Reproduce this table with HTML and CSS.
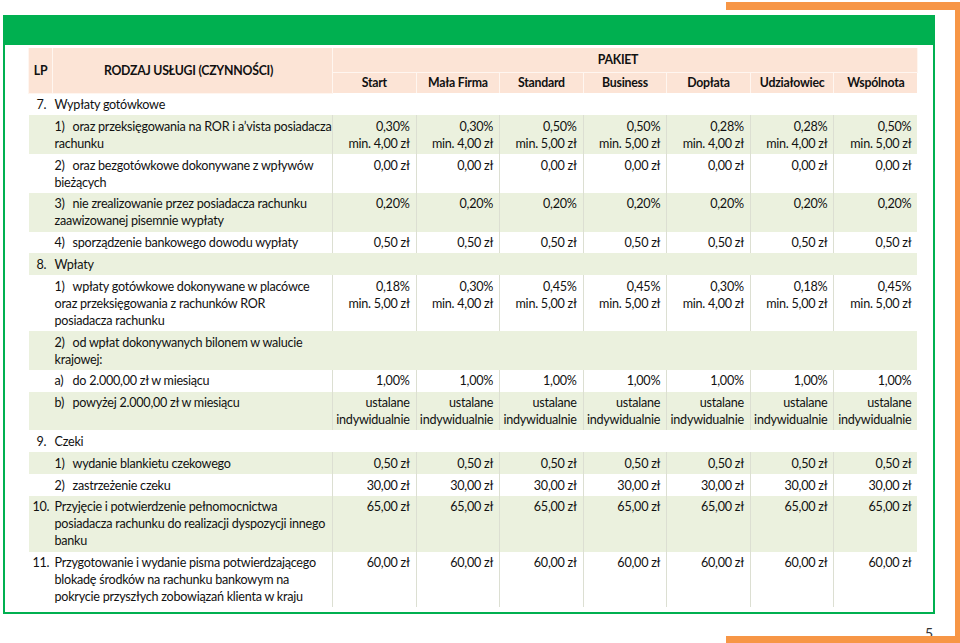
FILE: index.html
```html
<!DOCTYPE html>
<html lang="pl">
<head>
<meta charset="utf-8">
<title>Tabela opłat</title>
<link rel="stylesheet" href="styles.css">
</head>
<body>
<div class="page">
  <div class="frame">
    <table class="fees">
      <colgroup>
        <col class="c-lp"><col class="c-name">
        <col class="c-val"><col class="c-val"><col class="c-val"><col class="c-val"><col class="c-val"><col class="c-val"><col class="c-val">
      </colgroup>
      <thead>
        <tr class="h1">
          <th rowspan="2" class="th-lp">LP</th>
          <th rowspan="2" class="th-name">RODZAJ USŁUGI (CZYNNOŚCI)</th>
          <th colspan="7" class="th-pak">PAKIET</th>
        </tr>
        <tr class="h2">
          <th>Start</th><th>Mała Firma</th><th>Standard</th><th>Business</th><th>Dopłata</th><th>Udziałowiec</th><th>Wspólnota</th>
        </tr>
      </thead>
      <tbody>
        <tr class="sec">
          <td class="lp">7.</td><td colspan="8" class="sec-t">Wypłaty gotówkowe</td>
        </tr>
        <tr class="g">
          <td></td><td class="name"><span class="n">1)</span><span class="t">oraz przeksięgowania na ROR i a’vista posiadacza<br>rachunku</span></td>
          <td class="v">0,30%<br>min. 4,00 zł</td><td class="v">0,30%<br>min. 4,00 zł</td><td class="v">0,50%<br>min. 5,00 zł</td><td class="v">0,50%<br>min. 5,00 zł</td><td class="v">0,28%<br>min. 4,00 zł</td><td class="v">0,28%<br>min. 4,00 zł</td><td class="v">0,50%<br>min. 5,00 zł</td>
        </tr>
        <tr>
          <td></td><td class="name"><span class="n">2)</span><span class="t">oraz bezgotówkowe dokonywane z wpływów<br>bieżących</span></td>
          <td class="v">0,00 zł</td><td class="v">0,00 zł</td><td class="v">0,00 zł</td><td class="v">0,00 zł</td><td class="v">0,00 zł</td><td class="v">0,00 zł</td><td class="v">0,00 zł</td>
        </tr>
        <tr class="g">
          <td></td><td class="name"><span class="n">3)</span><span class="t">nie zrealizowanie przez posiadacza rachunku<br>zaawizowanej pisemnie wypłaty</span></td>
          <td class="v">0,20%</td><td class="v">0,20%</td><td class="v">0,20%</td><td class="v">0,20%</td><td class="v">0,20%</td><td class="v">0,20%</td><td class="v">0,20%</td>
        </tr>
        <tr>
          <td></td><td class="name"><span class="n">4)</span><span class="t">sporządzenie bankowego dowodu wypłaty</span></td>
          <td class="v">0,50 zł</td><td class="v">0,50 zł</td><td class="v">0,50 zł</td><td class="v">0,50 zł</td><td class="v">0,50 zł</td><td class="v">0,50 zł</td><td class="v">0,50 zł</td>
        </tr>
        <tr class="sec g">
          <td class="lp">8.</td><td colspan="8" class="sec-t">Wpłaty</td>
        </tr>
        <tr>
          <td></td><td class="name"><span class="n">1)</span><span class="t">wpłaty gotówkowe dokonywane w placówce<br>oraz przeksięgowania z rachunków ROR<br>posiadacza rachunku</span></td>
          <td class="v">0,18%<br>min. 5,00 zł</td><td class="v">0,30%<br>min. 4,00 zł</td><td class="v">0,45%<br>min. 5,00 zł</td><td class="v">0,45%<br>min. 5,00 zł</td><td class="v">0,30%<br>min. 4,00 zł</td><td class="v">0,18%<br>min. 5,00 zł</td><td class="v">0,45%<br>min. 5,00 zł</td>
        </tr>
        <tr class="g">
          <td></td><td colspan="8" class="name"><span class="n">2)</span><span class="t">od wpłat dokonywanych bilonem w walucie<br>krajowej:</span></td>
        </tr>
        <tr>
          <td></td><td class="name"><span class="n">a)</span><span class="t">do 2.000,00 zł w miesiącu</span></td>
          <td class="v">1,00%</td><td class="v">1,00%</td><td class="v">1,00%</td><td class="v">1,00%</td><td class="v">1,00%</td><td class="v">1,00%</td><td class="v">1,00%</td>
        </tr>
        <tr class="g">
          <td></td><td class="name"><span class="n">b)</span><span class="t">powyżej 2.000,00 zł w miesiącu</span></td>
          <td class="v">ustalane<br>indywidualnie</td><td class="v">ustalane<br>indywidualnie</td><td class="v">ustalane<br>indywidualnie</td><td class="v">ustalane<br>indywidualnie</td><td class="v">ustalane<br>indywidualnie</td><td class="v">ustalane<br>indywidualnie</td><td class="v">ustalane<br>indywidualnie</td>
        </tr>
        <tr class="sec">
          <td class="lp">9.</td><td colspan="8" class="sec-t">Czeki</td>
        </tr>
        <tr class="g">
          <td></td><td class="name"><span class="n">1)</span><span class="t">wydanie blankietu czekowego</span></td>
          <td class="v">0,50 zł</td><td class="v">0,50 zł</td><td class="v">0,50 zł</td><td class="v">0,50 zł</td><td class="v">0,50 zł</td><td class="v">0,50 zł</td><td class="v">0,50 zł</td>
        </tr>
        <tr>
          <td></td><td class="name"><span class="n">2)</span><span class="t">zastrzeżenie czeku</span></td>
          <td class="v">30,00 zł</td><td class="v">30,00 zł</td><td class="v">30,00 zł</td><td class="v">30,00 zł</td><td class="v">30,00 zł</td><td class="v">30,00 zł</td><td class="v">30,00 zł</td>
        </tr>
        <tr class="g">
          <td class="lp lp2">10.</td><td class="name">Przyjęcie i potwierdzenie pełnomocnictwa<br>posiadacza rachunku do realizacji dyspozycji innego<br>banku</td>
          <td class="v">65,00 zł</td><td class="v">65,00 zł</td><td class="v">65,00 zł</td><td class="v">65,00 zł</td><td class="v">65,00 zł</td><td class="v">65,00 zł</td><td class="v">65,00 zł</td>
        </tr>
        <tr>
          <td class="lp lp2">11.</td><td class="name">Przygotowanie i wydanie pisma potwierdzającego<br>blokadę środków na rachunku bankowym na<br>pokrycie przyszłych zobowiązań klienta w kraju</td>
          <td class="v">60,00 zł</td><td class="v">60,00 zł</td><td class="v">60,00 zł</td><td class="v">60,00 zł</td><td class="v">60,00 zł</td><td class="v">60,00 zł</td><td class="v">60,00 zł</td>
        </tr>
      </tbody>
    </table>
  </div>
  <div class="pagenum">5</div>
</div>
</body>
</html>
```

FILE: styles.css
```css
* { box-sizing: border-box; }
html, body { margin: 0; padding: 0; background: #fff; }
body {
  font-family: Lato, "Open Sans", sans-serif;
  color: #111;
}
.page {
  position: relative;
  width: 960px;
  height: 643px;
  overflow: hidden;
  padding-top: 15px;
  padding-left: 3px;
}
.page::before {
  content: "";
  position: absolute;
  left: 726px;
  top: 2px;
  width: 229px;
  height: 626px;
  border-top: 8px solid #f79646;
  border-right: 12px solid #f79646;
  border-bottom: 10px solid #f79646;
}
.frame {
  position: relative;
  width: 932px;
  height: 599px;
  border: 2px solid #00b050;
  border-top: 30px solid #00b050;
  padding: 3px 0 0 23px;
  background: #fff;
}
.fees {
  border-collapse: collapse;
  table-layout: fixed;
  width: 889px;
  font-size: 12.6px;
  letter-spacing: -0.25px;
  line-height: 17px;
}
.c-lp { width: 24px; }
.c-name { width: 280px; }
.c-val { width: 83.57px; }

.fees th {
  background: #fce4d6;
  font-weight: bold;
  font-size: 12.3px;
  letter-spacing: -0.25px;
  text-align: center;
  padding: 0;
  border: 1px solid #fff6f0;
  white-space: nowrap;
}
.h1 { height: 24px; }
.h2 { height: 21px; }
.th-lp { border-left: none; }
.th-name { padding-right: 8px !important; }
.th-pak { border-top: none; border-right: none; padding-right: 14px !important; }
.h2 th:last-child { border-right: none; }
.h1 th { border-top: none; }
.h2 th { border-bottom: none; }

.fees td {
  padding: 2.5px 0 2.3px 0;
  vertical-align: top;
}
.fees tr.g td { background: #ebf1de; }

.lp { padding-left: 8px !important; white-space: nowrap; }
.lp2 { padding-left: 4px !important; }
.sec-t { padding-left: 2px !important; }
.name {
  padding-left: 2px !important;
  padding-right: 0 !important;
  white-space: nowrap;
}
.name .n { float: left; width: 18px; }
.name .t { display: block; }
.v {
  text-align: right;
  padding-right: 6px !important;
  white-space: nowrap;
  border-left: 1px solid #dcdfd2;
}
.pagenum {
  text-align: right;
  padding-right: 27px;
  margin-top: 12px;
  font-size: 14px;
  line-height: 14px;
  color: #333;
}
```
